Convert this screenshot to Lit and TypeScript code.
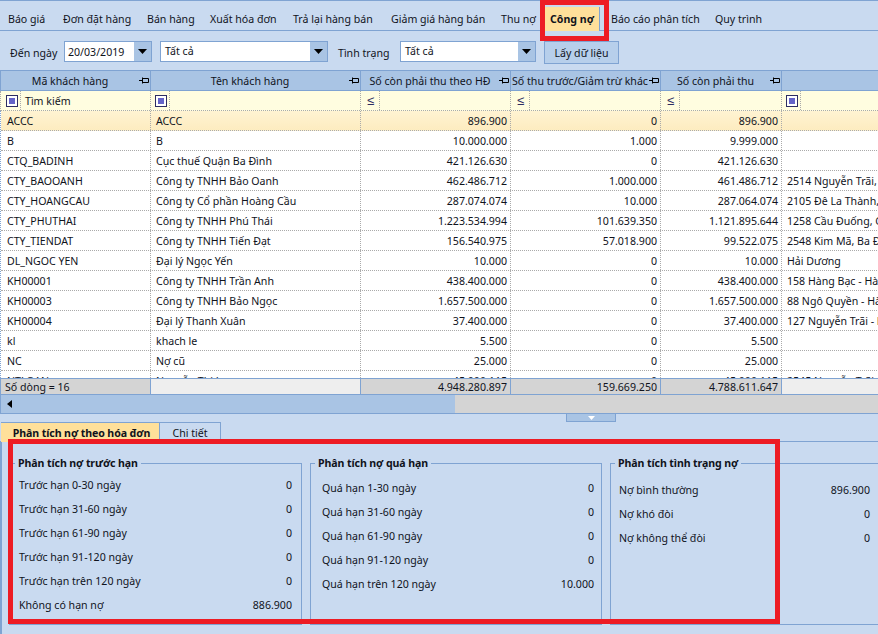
import { LitElement, html, css, nothing } from "lit";
import { customElement } from "lit/decorators.js";

const TABS = ["Báo giá", "Đơn đặt hàng", "Bán hàng", "Xuất hóa đơn", "Trả lại hàng bán", "Giảm giá hàng bán", "Thu nợ", "Công nợ", "Báo cáo phân tích", "Quy trình"];
const HEAD = ["Mã khách hàng", "Tên khách hàng", "Số còn phải thu theo HĐ", "Số thu trước/Giảm trừ khác", "Số còn phải thu"];
const ROWS = [
  ["ACCC", "ACCC", "896.900", "0", "896.900", ""],
  ["B", "B", "10.000.000", "1.000", "9.999.000", ""],
  ["CTQ_BADINH", "Cục thuế Quận Ba Đình", "421.126.630", "0", "421.126.630", ""],
  ["CTY_BAOOANH", "Công ty TNHH Bảo Oanh", "462.486.712", "1.000.000", "461.486.712", "2514 Nguyễn Trãi, Hà Nội"],
  ["CTY_HOANGCAU", "Công ty Cổ phần Hoàng Cầu", "287.074.074", "10.000", "287.064.074", "2105 Đê La Thành, Hà Nội"],
  ["CTY_PHUTHAI", "Công ty TNHH Phú Thái", "1.223.534.994", "101.639.350", "1.121.895.644", "1258 Cầu Đuống, Gia Lâm"],
  ["CTY_TIENDAT", "Công ty TNHH Tiến Đạt", "156.540.975", "57.018.900", "99.522.075", "2548 Kim Mã, Ba Đình"],
  ["DL_NGOC YEN", "Đại lý Ngọc Yến", "10.000", "0", "10.000", "Hải Dương"],
  ["KH00001", "Công ty TNHH Trần Anh", "438.400.000", "0", "438.400.000", "158 Hàng Bạc - Hà Nội"],
  ["KH00003", "Công ty TNHH Bảo Ngọc", "1.657.500.000", "0", "1.657.500.000", "88 Ngô Quyền - Hà Nội"],
  ["KH00004", "Đại lý Thanh Xuân", "37.400.000", "0", "37.400.000", "127 Nguyễn Trãi - Hà Nội"],
  ["kl", "khach le", "5.500", "0", "5.500", ""],
  ["NC", "Nợ cũ", "25.000", "0", "25.000", ""],
  ["NTLOAN", "Nguyễn Thị Loan", "45.000.115", "0", "45.000.115", "2545 Nguyễn Trãi"],
];
const GROUPS = [
  { cls: "g1", title: "Phân tích nợ trước hạn", rows: [["Trước hạn 0-30 ngày", "0"], ["Trước hạn 31-60 ngày", "0"], ["Trước hạn 61-90 ngày", "0"], ["Trước hạn 91-120 ngày", "0"], ["Trước hạn trên 120 ngày", "0"], ["Không có hạn nợ", "886.900"]] },
  { cls: "g2", title: "Phân tích nợ quá hạn", rows: [["Quá hạn 1-30 ngày", "0"], ["Quá hạn 31-60 ngày", "0"], ["Quá hạn 61-90 ngày", "0"], ["Quá hạn 91-120 ngày", "0"], ["Quá hạn trên 120 ngày", "10.000"]] },
  { cls: "g3", title: "Phân tích tình trạng nợ", rows: [["Nợ bình thường", "896.900"], ["Nợ khó đòi", "0"], ["Nợ không thể đòi", "0"]] },
];

const pin = html`<svg class="pin" width="10" height="7" viewBox="0 0 10 7"><path d="M0 3.500H3.500M3.500 .5V6.500M3.500 1.500H9.500V5.500H3.500" fill="none" stroke="#000" stroke-width="1"/></svg>`;
const arrow = html`<svg width="9" height="5" viewBox="0 0 9 5"><path d="M0 0H9L4.500 5Z" fill="#000"/></svg>`;
const check = html`<span class="chk"><i></i></span>`;
const le = html`<span class="le">≤</span>`;

@customElement("app-root")
export class AppRoot extends LitElement {
  static styles = css`
    :host { display: block; width: 878px; height: 634px; position: relative; overflow: hidden;
      background: #c9daf0; color: #10131c; font: 10.6px/14px "Noto Sans", "Liberation Sans", sans-serif; }
    * { box-sizing: border-box; }
    .tabs { height: 31px; border-top: 1px solid #7fa3d2; border-bottom: 1px solid #7fa3d2; padding: 6px 0 0 3px;
      display: grid; grid-template-columns: 55px 84px 63px 83px 98px 110px 49px 55px 110px 80px; }
    .tab { padding: 5px 0 0 5px; white-space: nowrap; height: 24px; }
    .tab.on { background: #ffe09a; font-weight: 700; border-right: 1px solid #7fa3d2; }
    .tab.after { padding-left: 11px; }
    .bar { height: 39px; padding-top: 10px; display: flex; align-items: flex-start; }
    .lbl { padding-top: 5px; white-space: nowrap; }
    .l1 { width: 64px; padding-left: 10px; }
    .l2 { width: 72px; padding-left: 10px; }
    .combo { height: 21px; border: 1px solid #7fa3d2; background: #fff; display: flex; }
    .combo span { flex: 1; padding: 3px 0 0 3px; white-space: nowrap; }
    .combo b { width: 17px; background: #a9c4e4; display: flex; align-items: center; justify-content: center; }
    .c1 { width: 88px; margin-right: 8px; }
    .c2 { width: 168px; }
    .c2 span, .c3 span { padding-left: 4px; padding-top: 2px; }
    .c3 { width: 136px; margin-right: 8px; }
    .btn { width: 75px; height: 23px; border: 1px solid #7fa3d2; background: #b7cfeb; text-align: center; padding-top: 4px; white-space: nowrap; }
    .row { display: grid; grid-template-columns: 150px 210px 150px 150px 121px 120px; width: 902px; }
    .head { height: 21px; background: #a9c4e4; border-top: 1px solid #7fa3d2; border-bottom: 1px solid #7fa3d2; border-left: 1px solid #7fa3d2; }
    .hc { border-right: 1px solid #7fa3d2; display: flex; align-items: center; padding-right: 1px; min-width: 0; }
    .hc span { flex: 1; text-align: center; white-space: nowrap; }
    .pin { flex: none; }
    .fil { height: 20px; background: #fffde0; border-bottom: 1px dotted #aaa; border-left: 1px dotted #aaa; }
    .fc { border-right: 1px dotted #aaa; display: flex; align-items: stretch; }
    .fi { width: 19px; flex: none; border-right: 1px dotted #aaa; display: flex; align-items: center; justify-content: center; padding-left: 1px; }
    .fc.first .fi { width: 20px; padding-left: 2px; }
    .fc .t { padding: 3px 0 0 4px; white-space: nowrap; }
    .chk { width: 12px; height: 12px; border: 1px solid #2d2d62; background: #fff; padding: 2px; display: block; }
    .chk i { display: block; width: 6px; height: 6px; background: #6464c8; }
    .le { color: #2d2d62; font-size: 13px; line-height: 11px; display: block; height: 11px; width: 9px; text-align: center; overflow: visible; }
    .body { height: 267px; overflow: hidden; background: #fff; border-left: 1px dotted #7fa3d2; }
    .dr { height: 20px; border-bottom: 1px dotted #aaa; }
    .dr.sel { background: linear-gradient(#fff3d2, #fdecc0); }
    .dc { border-right: 1px dotted #aaa; padding: 3px 0 0 5px; white-space: nowrap; overflow: hidden; }
    .dc:first-child { padding-left: 6px; }
    .dc.num { text-align: right; padding: 3px 3px 0 0; }
    .foot { height: 17px; border-top: 1px solid #7fa3d2; border-bottom: 1px solid #7fa3d2; border-left: 1px solid #7fa3d2; background: #eee; }
    .ft { border-right: 1px solid #7fa3d2; background: #d4d4d4; padding: 1px 3px 0 4px; white-space: nowrap; text-align: right; }
    .ft.l { text-align: left; }
    .ft.e { background: #eee; }
    .scroll { height: 19px; display: flex; background: #d4d4d4; border-bottom: 1px solid #7fa3d2; }
    .thumb { width: 455px; background: #a9c4e4; display: flex; align-items: center; padding-left: 6px; border-left: 1px solid #7fa3d2; }
    .split { height: 8px; display: flex; justify-content: center; padding-left: 304px; }
    .handle { width: 50px; height: 8px; background: #a9c4e4; border: 1px solid #7fa3d2; border-top: none; display: flex; justify-content: center; padding-top: 2px; }
    .btabs { height: 20px; display: flex; padding-left: 1px; border-bottom: 1px solid #7fa3d2; }
    .bt { height: 19px; padding: 3px 0 0; text-align: center; border: 1px solid #7fa3d2; border-bottom: none; white-space: nowrap; }
    .bt.on { width: 159px; background: #ffe09a; font-weight: 700; height: 20px; border: none; border-top: 1px solid #7fa3d2; border-right: 1px solid #7fa3d2; padding-left: 3px; letter-spacing: -0.1px; }
    .bt.off { width: 61px; border-left: none; }
    .panel { height: 193px; border-left: 2px solid #7fa3d2; padding: 14px 0 0 7px; display: flex; gap: 8px; }
    fieldset { margin: 0; height: 169px; flex: none; border: 1px solid #7fa3d2; padding: 0; min-width: 0; }
    legend { font-weight: 700; line-height: 14px; padding: 0 3px; white-space: nowrap; letter-spacing: -0.1px; margin-left: 4px; }
    .g1 { width: 293px; }
    .g1 legend { margin-left: 5px; }
    .g2 { width: 292px; }
    .g3 { width: 300px; }
    .rows { display: flex; flex-direction: column; }
    .g1 .rows { padding: 5px 9px 0; }
    .g2 .rows { padding: 8px 7px 0 11px; }
    .g3 .rows { padding: 10px 0 0 8px; width: 259px; }
    .gr { height: 24px; display: flex; justify-content: space-between; white-space: nowrap; padding-top: 3px; }
    .mark { position: absolute; border: 5px solid #ed1c24; pointer-events: none; }
    .m1 { left: 540px; top: 0; width: 69px; height: 41px; }
    .m2 { left: 8px; top: 439px; width: 772px; height: 185px; }
  `;

  render() {
    return html`
      <div class="tabs">
        ${TABS.map((t, i) => html`<div class="tab ${i === 7 ? "on" : ""} ${i === 8 ? "after" : ""}">${t}</div>`)}
      </div>
      <div class="bar">
        <div class="lbl l1">Đến ngày</div>
        <div class="combo c1"><span>20/03/2019</span><b>${arrow}</b></div>
        <div class="combo c2"><span>Tất cả</span><b>${arrow}</b></div>
        <div class="lbl l2">Tình trạng</div>
        <div class="combo c3"><span>Tất cả</span><b>${arrow}</b></div>
        <div class="btn">Lấy dữ liệu</div>
      </div>
      <div class="row head">
        ${HEAD.map((h) => html`<div class="hc"><span>${h}</span>${pin}</div>`)}
        <div class="hc"></div>
      </div>
      <div class="row fil">
        <div class="fc first"><div class="fi">${check}</div><div class="t">Tìm kiếm</div></div>
        <div class="fc"><div class="fi">${check}</div></div>
        <div class="fc"><div class="fi">${le}</div></div>
        <div class="fc"><div class="fi">${le}</div></div>
        <div class="fc"><div class="fi">${le}</div></div>
        <div class="fc"><div class="fi">${check}</div></div>
      </div>
      <div class="body">
        ${ROWS.map((r, i) => html`<div class="row dr ${i === 0 ? "sel" : ""}">
          ${r.map((c, j) => html`<div class="dc ${j >= 2 && j <= 4 ? "num" : ""}">${c || nothing}</div>`)}
        </div>`)}
      </div>
      <div class="row foot">
        <div class="ft l">Số dòng = 16</div>
        <div class="ft e"></div>
        <div class="ft">4.948.280.897</div>
        <div class="ft">159.669.250</div>
        <div class="ft">4.788.611.647</div>
        <div class="ft e"></div>
      </div>
      <div class="scroll">
        <div class="thumb"><svg width="5" height="8" viewBox="0 0 5 8"><path d="M5 0V8L0 4Z" fill="#000"/></svg></div>
      </div>
      <div class="split"><div class="handle"><svg width="7" height="4" viewBox="0 0 7 4"><path d="M0 0H7L3.500 4Z" fill="#fff"/></svg></div></div>
      <div class="btabs">
        <div class="bt on">Phân tích nợ theo hóa đơn</div>
        <div class="bt off">Chi tiết</div>
      </div>
      <div class="panel">
        ${GROUPS.map((g) => html`<fieldset class=${g.cls}>
          <legend>${g.title}</legend>
          <div class="rows">
            ${g.rows.map((r) => html`<div class="gr"><span>${r[0]}</span><span>${r[1]}</span></div>`)}
          </div>
        </fieldset>`)}
      </div>
      <div class="mark m1"></div>
      <div class="mark m2"></div>
    `;
  }
}
